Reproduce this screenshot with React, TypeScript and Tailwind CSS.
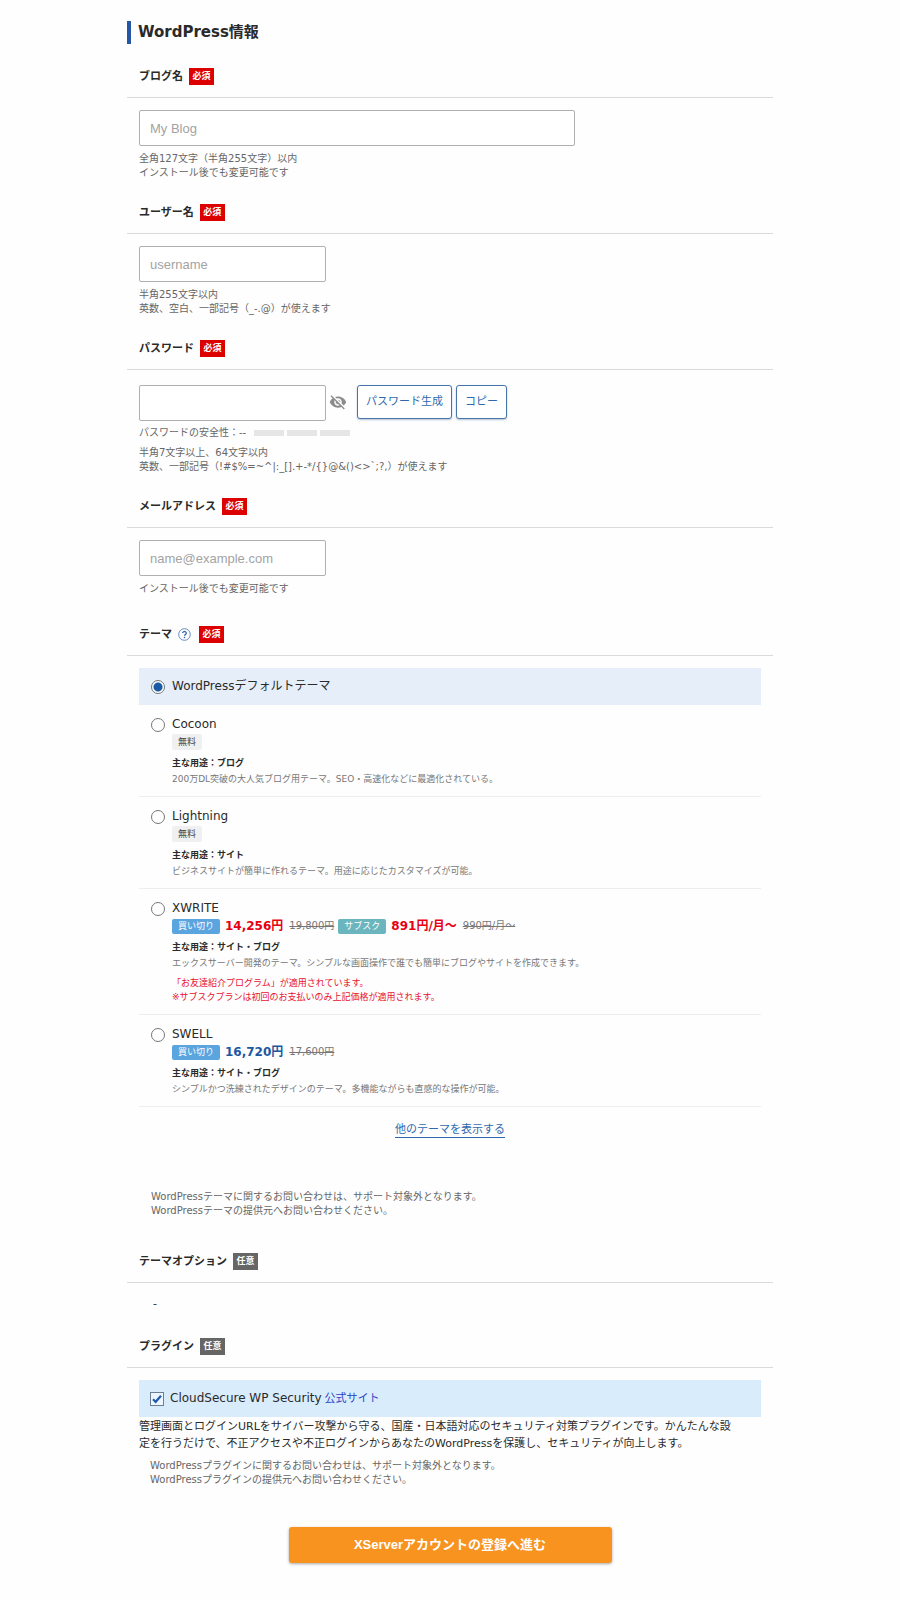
import React, { useState } from 'react';

interface Price {
  kind: 'buy' | 'sub';
  value: string;
  was: string;
}

interface Theme {
  id: string;
  name: string;
  free?: boolean;
  prices?: Price[];
  sale?: boolean;
  usage: string;
  desc: string;
  notes?: string[];
}

const themes: Theme[] = [
  { id: 'cocoon', name: 'Cocoon', free: true, usage: 'ブログ', desc: '200万DL突破の大人気ブログ用テーマ。SEO・高速化などに最適化されている。' },
  { id: 'lightning', name: 'Lightning', free: true, usage: 'サイト', desc: 'ビジネスサイトが簡単に作れるテーマ。用途に応じたカスタマイズが可能。' },
  {
    id: 'xwrite',
    name: 'XWRITE',
    sale: true,
    prices: [
      { kind: 'buy', value: '14,256円', was: '19,800円' },
      { kind: 'sub', value: '891円/月〜', was: '990円/月〜' },
    ],
    usage: 'サイト・ブログ',
    desc: 'エックスサーバー開発のテーマ。シンプルな画面操作で誰でも簡単にブログやサイトを作成できます。',
    notes: ['「お友達紹介プログラム」が適用されています。', '※サブスクプランは初回のお支払いのみ上記価格が適用されます。'],
  },
  {
    id: 'swell',
    name: 'SWELL',
    prices: [{ kind: 'buy', value: '16,720円', was: '17,600円' }],
    usage: 'サイト・ブログ',
    desc: 'シンプルかつ洗練されたデザインのテーマ。多機能ながらも直感的な操作が可能。',
  },
];

const inputClass =
  "h-9 rounded-xs border border-[#b0b0b0] bg-white px-[10px] font-['Liberation_Sans',sans-serif] text-[13px] text-[#333] placeholder:text-[#a3a3a3] focus:outline-none focus:border-[#2a5ba8]";
const radioClass =
  'h-[14px] w-[14px] shrink-0 appearance-none rounded-full border border-[#767676] bg-white checked:bg-[radial-gradient(circle,#1a5ba6_4px,#fff_5px)]';
const outlineButton =
  'h-[34px] rounded-[3px] border border-[#4674ab] bg-white text-[11px] text-[#2f69ad] shadow-[0_1px_2px_rgba(40,80,130,0.35)]';

const Tag: React.FC<{ required?: boolean }> = ({ required }) => (
  <span className={`w-[25px] text-center text-[9px] leading-[17px] font-bold text-white ${required ? 'bg-[#dc0000]' : 'bg-[#666]'}`}>
    {required ? '必須' : '任意'}
  </span>
);

interface FieldProps {
  label: string;
  htmlFor?: string;
  required?: boolean;
  help?: boolean;
  className?: string;
  children: React.ReactNode;
}

const Field: React.FC<FieldProps> = ({ label, htmlFor, required, help, className = 'mt-3', children }) => (
  <section className={className}>
    <div className="flex h-[42px] items-center gap-[6px] border-b border-[#dadada] px-3">
      {htmlFor ? (
        <label htmlFor={htmlFor} className="text-[11px] leading-4 font-bold">{label}</label>
      ) : (
        <h3 className="text-[11px] leading-4 font-bold">{label}</h3>
      )}
      {help && (
        <button type="button" aria-label="ヘルプ" className="mr-[2px]">
          <svg width="13" height="13" viewBox="0 0 13 13" fill="none">
            <circle cx="6.5" cy="6.5" r="5.8" stroke="#5580b5" strokeWidth="0.9" />
            <path d="M4.7 5.1a1.8 1.6 0 1 1 2.7 1.4c-.6.4-.9.6-.9 1.3" stroke="#2f64a8" strokeWidth="1.3" />
            <circle cx="6.5" cy="9.5" r="0.8" fill="#2f64a8" />
          </svg>
        </button>
      )}
      <Tag required={required} />
    </div>
    <div className="px-3 pt-3">{children}</div>
  </section>
);

const Hint: React.FC<{ className?: string; children: React.ReactNode }> = ({ className = 'mt-[6px]', children }) => (
  <p className={`text-[10px] leading-[14px] text-[#666] ${className}`}>{children}</p>
);

const ThemeItem: React.FC<{ theme: Theme; selected: boolean; onSelect: () => void }> = ({ theme, selected, onSelect }) => (
  <li className="border-b border-[#eee] px-3 pt-3 pb-[10px]">
    <label htmlFor={theme.id} className="flex items-center gap-[7px] text-[12px] leading-[15px]">
      <input id={theme.id} type="radio" name="theme" checked={selected} onChange={onSelect} className={radioClass} />
      {theme.name}
    </label>
    <div className="pl-[21px]">
      <div className="mt-[2px] flex h-4 items-center">
        {theme.free && <span className="rounded-xs bg-[#f0f0f0] px-[6px] text-[9px] leading-4 text-[#444]">無料</span>}
        {theme.prices?.map((p) => (
          <React.Fragment key={p.kind}>
            <span className={`rounded-xs px-[6px] text-[9px] leading-[15px] text-white ${p.kind === 'buy' ? 'bg-[#5ba5df]' : 'bg-[#6ab5be]'}`}>
              {p.kind === 'buy' ? '買い切り' : 'サブスク'}
            </span>
            <strong className={`ml-[5px] text-[12px] leading-4 ${theme.sale ? 'text-[#e60012]' : 'text-[#1c57a0]'}`}>{p.value}</strong>
            <s className="mr-1 ml-[6px] text-[10px] leading-4 text-[#777]">{p.was}</s>
          </React.Fragment>
        ))}
      </div>
      <p className="mt-[6px] text-[9px] leading-[14px] font-bold">主な用途：{theme.usage}</p>
      <p className="mt-[2px] text-[9px] leading-[14px] text-[#777]">{theme.desc}</p>
      {theme.notes && (
        <div className="mt-[6px] text-[9px] leading-[14px] text-[#e8112d]">
          {theme.notes.map((n) => <p key={n}>{n}</p>)}
        </div>
      )}
    </div>
  </li>
);

export default function App() {
  const [theme, setTheme] = useState('default');
  const [showPassword, setShowPassword] = useState(false);
  const [secure, setSecure] = useState(true);

  return (
    <form
      lang="ja"
      onSubmit={(e) => e.preventDefault()}
      className="min-h-screen bg-[#fefefe] px-4 pt-[21px] pb-[37px] font-['DejaVu_Sans','Noto_Sans_CJK_JP',sans-serif] text-[#2a2a2a]"
    >
      <div className="mx-auto max-w-[646px]">
        <h2 className="border-l-4 border-[#2657a7] pl-[7px] text-[15px] leading-[23px] font-bold">WordPress情報</h2>

        <Field label="ブログ名" htmlFor="blog" required>
          <input id="blog" type="text" placeholder="My Blog" className={`${inputClass} w-full max-w-[436px]`} />
          <Hint>全角127文字（半角255文字）以内<br />インストール後でも変更可能です</Hint>
        </Field>

        <Field label="ユーザー名" htmlFor="user" required>
          <input id="user" type="text" placeholder="username" className={`${inputClass} w-[187px]`} />
          <Hint>半角255文字以内<br />英数、空白、一部記号（_-.@）が使えます</Hint>
        </Field>

        <Field label="パスワード" htmlFor="password" required>
          <div className="flex items-start pt-[3px]">
            <input id="password" type={showPassword ? 'text' : 'password'} className={`${inputClass} w-[187px]`} />
            <button
              type="button"
              aria-label="パスワードを表示"
              onClick={() => setShowPassword((v) => !v)}
              className="ml-[3px] flex h-[34px] items-center"
            >
              <svg width="18" height="18" viewBox="0 0 24 24" fill="#8c8c8c">
                <path d="M12 7c2.76 0 5 2.24 5 5 0 .65-.13 1.26-.36 1.83l2.92 2.92c1.51-1.26 2.7-2.89 3.43-4.75-1.73-4.39-6-7.5-11-7.5-1.4 0-2.74.25-3.98.7l2.16 2.16C10.74 7.13 11.35 7 12 7zM2 4.27l2.28 2.28.46.46C3.08 8.3 1.78 10.02 1 12c1.73 4.39 6 7.5 11 7.5 1.55 0 3.03-.3 4.38-.84l.42.42L19.73 22 21 20.73 3.27 3 2 4.27zM7.53 9.8l1.55 1.55c-.05.21-.08.43-.08.65 0 1.66 1.34 3 3 3 .22 0 .44-.03.65-.08l1.55 1.55c-.67.33-1.41.53-2.2.53-2.76 0-5-2.24-5-5 0-.79.2-1.53.53-2.2zm4.31-.78l3.15 3.15.02-.16c0-1.66-1.34-3-3-3l-.17.01z" />
              </svg>
            </button>
            <button type="button" className={`${outlineButton} ml-[10px] px-2`}>パスワード生成</button>
            <button type="button" className={`${outlineButton} ml-1 px-2`}>コピー</button>
          </div>
          <div className="mt-[5px] flex items-center gap-[3px] text-[10px] leading-[14px] text-[#666]">
            <span className="mr-[5px]">パスワードの安全性：--</span>
            <span className="h-[6px] w-[30px] bg-[#e6e6e6]" />
            <span className="h-[6px] w-[30px] bg-[#e6e6e6]" />
            <span className="h-[6px] w-[30px] bg-[#e6e6e6]" />
          </div>
          <Hint>
            半角7文字以上、64文字以内<br />
            {'英数、一部記号（!#$%=~^|:_[].+-*/{}@&()<>`;?,）が使えます'}
          </Hint>
        </Field>

        <Field label="メールアドレス" htmlFor="email" required>
          <input id="email" type="email" placeholder="name@example.com" className={`${inputClass} w-[187px]`} />
          <Hint>インストール後でも変更可能です</Hint>
        </Field>

        <Field label="テーマ" required help className="mt-[18px]">
          <ul>
            <li className={theme === 'default' ? 'bg-[#e5eef9]' : ''}>
              <label htmlFor="default" className="flex h-[37px] items-center gap-[7px] px-3 text-[12px] leading-[15px]">
                <input
                  id="default"
                  type="radio"
                  name="theme"
                  checked={theme === 'default'}
                  onChange={() => setTheme('default')}
                  className={radioClass}
                />
                WordPressデフォルトテーマ
              </label>
            </li>
            {themes.map((t) => (
              <ThemeItem key={t.id} theme={t} selected={theme === t.id} onSelect={() => setTheme(t.id)} />
            ))}
          </ul>
          <div className="flex h-[83px] justify-center pt-[15px]">
            <a href="#themes" className="self-start border-b border-[#2f69ad] text-[11px] leading-[15px] text-[#2f69ad]">他のテーマを表示する</a>
          </div>
          <Hint className="px-3">
            WordPressテーマに関するお問い合わせは、サポート対象外となります。<br />
            WordPressテーマの提供元へお問い合わせください。
          </Hint>
        </Field>

        <Field label="テーマオプション" className="mt-[23px]">
          <p className="px-[14px] text-[11px] leading-[18px]">-</p>
        </Field>

        <Field label="プラグイン" className="mt-[13px]">
          <div className="flex h-[37px] items-center bg-[#d9ecfc] px-[11px] leading-4">
            <span className="relative flex h-[14px] w-[14px]">
              <input
                id="plugin"
                type="checkbox"
                checked={secure}
                onChange={(e) => setSecure(e.target.checked)}
                className="h-[14px] w-[14px] appearance-none border border-[#6b7f93] bg-[#eef6fd]"
              />
              {secure && (
                <svg className="pointer-events-none absolute inset-0" width="14" height="14" viewBox="0 0 14 14" fill="none">
                  <path d="M3 7.2l2.7 2.6L11 3.8" stroke="#1f5cae" strokeWidth="2.2" />
                </svg>
              )}
            </span>
            <div className="ml-[6px] flex items-baseline gap-[3px]">
              <label htmlFor="plugin" className="text-[12px] leading-4">CloudSecure WP Security</label>
              <a href="#official" className="text-[11px] leading-4 text-[#2c3fc4]">公式サイト</a>
            </div>
          </div>
          <p className="pt-px pr-[22px] text-[11px] leading-[17px]">
            管理画面とログインURLをサイバー攻撃から守る、国産・日本語対応のセキュリティ対策プラグインです。かんたんな設定を行うだけで、不正アクセスや不正ログインからあなたのWordPressを保護し、セキュリティが向上します。
          </p>
          <Hint className="mt-[7px] px-[11px]">
            WordPressプラグインに関するお問い合わせは、サポート対象外となります。<br />
            WordPressプラグインの提供元へお問い合わせください。
          </Hint>
        </Field>

        <div className="mt-10 flex justify-center">
          <button
            type="submit"
            className="h-9 w-full max-w-[323px] rounded-[3px] bg-[#f7931e] font-['Liberation_Sans','Noto_Sans_CJK_JP',sans-serif] text-[13px] font-bold text-white shadow-[0_1px_3px_rgba(0,0,0,0.35)]"
          >
            XServerアカウントの登録へ進む
          </button>
        </div>
      </div>
    </form>
  );
}
